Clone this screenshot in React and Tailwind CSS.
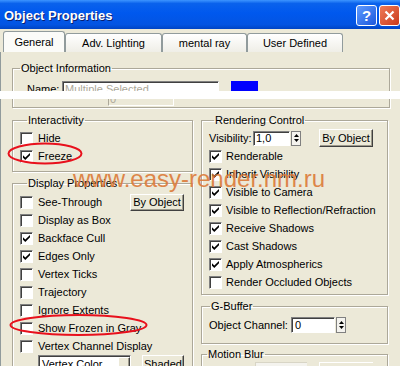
import React from 'react'
import clsx from 'clsx'

const field = 'border border-[#808080] border-r-white border-b-white bg-white shadow-[inset_1px_1px_0_#404040]'
const raised = 'border border-white border-r-[#404040] border-b-[#404040] bg-[#ECE9D8] shadow-[inset_-1px_-1px_0_#9d9a8c]'

function Box({ checked }){
  return (
    <span className={clsx('flex h-[13px] w-[13px] shrink-0 items-center justify-center', field)}>
      {checked && (
        <svg width="9" height="9" viewBox="0 0 9 9">
          <polygon points="1,3.3 3.3,5.6 8,0.9 8,3.3 3.3,8 1,5.7" fill="#000" />
        </svg>
      )}
    </span>
  )
}

function Check({ label, checked, children }){
  return (
    <div className="flex h-[18px] items-center gap-[5px]">
      <Box checked={checked} />
      <span>{label}</span>
      {children}
    </div>
  )
}

function Group({ title, legend = 'ml-[7px]', className, children }){
  return (
    <fieldset className={clsx('min-w-0 border border-[#aca899] shadow-[inset_1px_1px_0_#fff,1px_1px_0_#fff]', className)}>
      <legend className={clsx('px-[1px] leading-[13px]', legend)}>{title}</legend>
      {children}
    </fieldset>
  )
}

function Spinner({ h = 'h-[15px]' }){
  return (
    <div className={clsx('flex w-[10px] flex-col items-center justify-center gap-[2px] border border-[#808080] bg-[#f4f3ee]', h)}>
      <svg width="5" height="3" viewBox="0 0 5 3"><polygon points="2.5,0 5,3 0,3" fill="#000" /></svg>
      <svg width="5" height="3" viewBox="0 0 5 3"><polygon points="0,0 5,0 2.5,3" fill="#000" /></svg>
    </div>
  )
}

const tabs = [
  { t: 'General', w: 'w-[62px] h-[21px] bg-[#fbfbf8]' },
  { t: 'Adv. Lighting', w: 'w-[97px] h-[19px] bg-gradient-to-b from-white to-[#efeee7]' },
  { t: 'mental ray', w: 'w-[85px] h-[19px] bg-gradient-to-b from-white to-[#efeee7]' },
  { t: 'User Defined', w: 'w-[96px] h-[19px] bg-gradient-to-b from-white to-[#efeee7]' },
]

const display = [
  ['Display as Box', false],
  ['Backface Cull', true],
  ['Edges Only', true],
  ['Vertex Ticks', false],
  ['Trajectory', false],
  ['Ignore Extents', false],
  ['Show Frozen in Gray', false],
  ['Vertex Channel Display', false],
]

const render = [
  ['Renderable', true],
  ['Inherit Visibility', true],
  ['Visible to Camera', true],
  ['Visible to Reflection/Refraction', true],
  ['Receive Shadows', true],
  ['Cast Shadows', true],
  ['Apply Atmospherics', true],
  ['Render Occluded Objects', false],
]

export default function App(){
  return (
    <div className="relative h-[366px] w-[400px] overflow-hidden bg-[#ECE9D8] font-['Liberation_Sans',Arial,sans-serif] text-[11px] leading-[13px] text-black">
      {/* title bar */}
      <div className="flex h-[29px] items-center pl-[4px] pt-[2px] bg-[linear-gradient(to_bottom,#3d95ff_0%,#0a62ec_12%,#0058ee_45%,#0354e2_85%,#0044c4_100%)]">
        <span className="text-[13px] font-bold text-white [text-shadow:1px_1px_#0a1e6e]">Object Properties</span>
        <div className="ml-auto flex gap-[2px]">
          <div className="flex h-[21px] w-[21px] items-center justify-center rounded-[3px] border border-white bg-gradient-to-br from-[#5f9bff] to-[#1c56dc] text-[15px] font-bold leading-none text-white">?</div>
          <div className="flex h-[21px] w-[21px] items-center justify-center rounded-[3px] border border-white bg-gradient-to-br from-[#ef7a56] to-[#c9381a]">
            <svg width="11" height="11" viewBox="0 0 11 11"><path d="M1.5 1.5l8 8M9.5 1.5l-8 8" stroke="#fff" strokeWidth="2.2" /></svg>
          </div>
        </div>
      </div>

      {/* tabs */}
      <div className="mt-[2px] flex h-[21px] items-end pl-[3px]">
        {tabs.map(({ t, w }) => (
          <div key={t} className={clsx('flex items-center justify-center rounded-t-[3px] border border-b-0 border-[#919b9c]', w)}>{t}</div>
        ))}
      </div>

      <div className="border-l border-[#919b9c] px-[11px] pt-[10px]">
        <Group title="Object Information" className="w-[378px] pb-[1px]">
          <div className="mt-[6px] flex h-[16px] items-center pl-[14px]">
            <span className="w-[35px]">Name:</span>
            <div className={clsx('flex h-[16px] w-[157px] items-center pl-[2px] text-[#aca899]', field)}>Multiple Selected</div>
            <div className="ml-[12px] h-[16px] w-[27px] bg-[#0000ff]" />
          </div>
          <div className="flex h-[9px] pl-[95px]">
            <div className="h-[9px] w-[66px] overflow-hidden border-l border-[#aca899] border-b border-b-white border-r border-r-white pl-[1px] text-[#aca899]">
              <span className="-mt-[4px] block leading-[13px]">0</span>
            </div>
          </div>
        </Group>

        <div className="mt-[6px] flex gap-[8px]">
          <div className="flex w-[181px] flex-col gap-[5px]">
            <Group title="Interactivity" className="pl-[7px] pt-[2px] pb-[6px]">
              <Check label="Hide" />
              <Check label="Freeze" checked />
            </Group>
            <Group title="Display Properties" className="pl-[7px] pr-[8px] pt-[3px] h-[200px]">
              <Check label="See-Through">
                <div className={clsx('ml-auto flex h-[17px] w-[54px] items-center justify-center', raised)}>By Object</div>
              </Check>
              {display.map(([l, c]) => <Check key={l} label={l} checked={c} />)}
              <div className="flex pl-[18px]">
                <div className={clsx('flex h-[18px] w-[93px] items-center pl-[3px]', field)}>
                  <span>Vertex Color</span>
                  <div className={clsx('ml-auto h-[14px] w-[12px]', raised)} />
                </div>
                <div className={clsx('ml-auto flex h-[18px] w-[42px] items-center justify-center', raised)}>Shaded</div>
              </div>
            </Group>
          </div>

          <div className="flex w-[187px] flex-col">
            <Group title="Rendering Control" legend="ml-[5px]" className="pl-[7px] pt-[2px] pb-[3px]">
              <div className="flex h-[18px] items-center">
                <span className="w-[44px]">Visibility:</span>
                <div className={clsx('flex h-[15px] w-[37px] items-center pl-[2px]', field)}>1,0</div>
                <div className="ml-[1px]"><Spinner /></div>
                <div className={clsx('ml-[18px] flex h-[18px] w-[54px] items-center justify-center', raised)}>By Object</div>
              </div>
              {render.map(([l, c]) => (
                <div key={l} className="flex h-[18px] items-center gap-[4px]">
                  <Box checked={c} />
                  <span>{l}</span>
                </div>
              ))}
            </Group>
            <Group title="G-Buffer" legend="ml-[1px]" className="mt-[5px] pl-[7px] pt-[3px] pb-[9px]">
              <div className="flex h-[18px] items-center">
                <span className="w-[82px]">Object Channel:</span>
                <div className={clsx('flex h-[16px] w-[44px] items-center pl-[3px]', field)}>0</div>
                <div className="ml-[1px]"><Spinner h="h-[16px]" /></div>
              </div>
            </Group>
            <Group title="Motion Blur" legend="ml-[5px]" className="mt-[4px] h-[40px]">
              <div className="mt-[1px] flex pl-[53px]">
                <div className="h-[10px] w-[52px] border-l border-t border-[#d8d5c6] bg-[#f4f3ee]" />
                <div className="ml-[12px] h-[10px] w-[54px] border-l border-t border-white" />
              </div>
            </Group>
          </div>
        </div>
      </div>

      {/* overlays */}
      <div className="absolute left-0 top-[91px] h-[8px] w-[400px] bg-white" />
      <div className="pointer-events-none absolute left-[73px] top-[167px] whitespace-nowrap text-[24px] leading-[24px] text-[#dc7b3a] opacity-90">www.easy-render.nm.ru</div>
      <svg className="pointer-events-none absolute left-0 top-0" width="400" height="366">
        <ellipse cx="45" cy="153.5" rx="36.5" ry="10" fill="none" stroke="#e8101c" strokeWidth="2" />
        <ellipse cx="78.5" cy="325" rx="68" ry="10" fill="none" stroke="#e8101c" strokeWidth="2" />
      </svg>
    </div>
  )
}
